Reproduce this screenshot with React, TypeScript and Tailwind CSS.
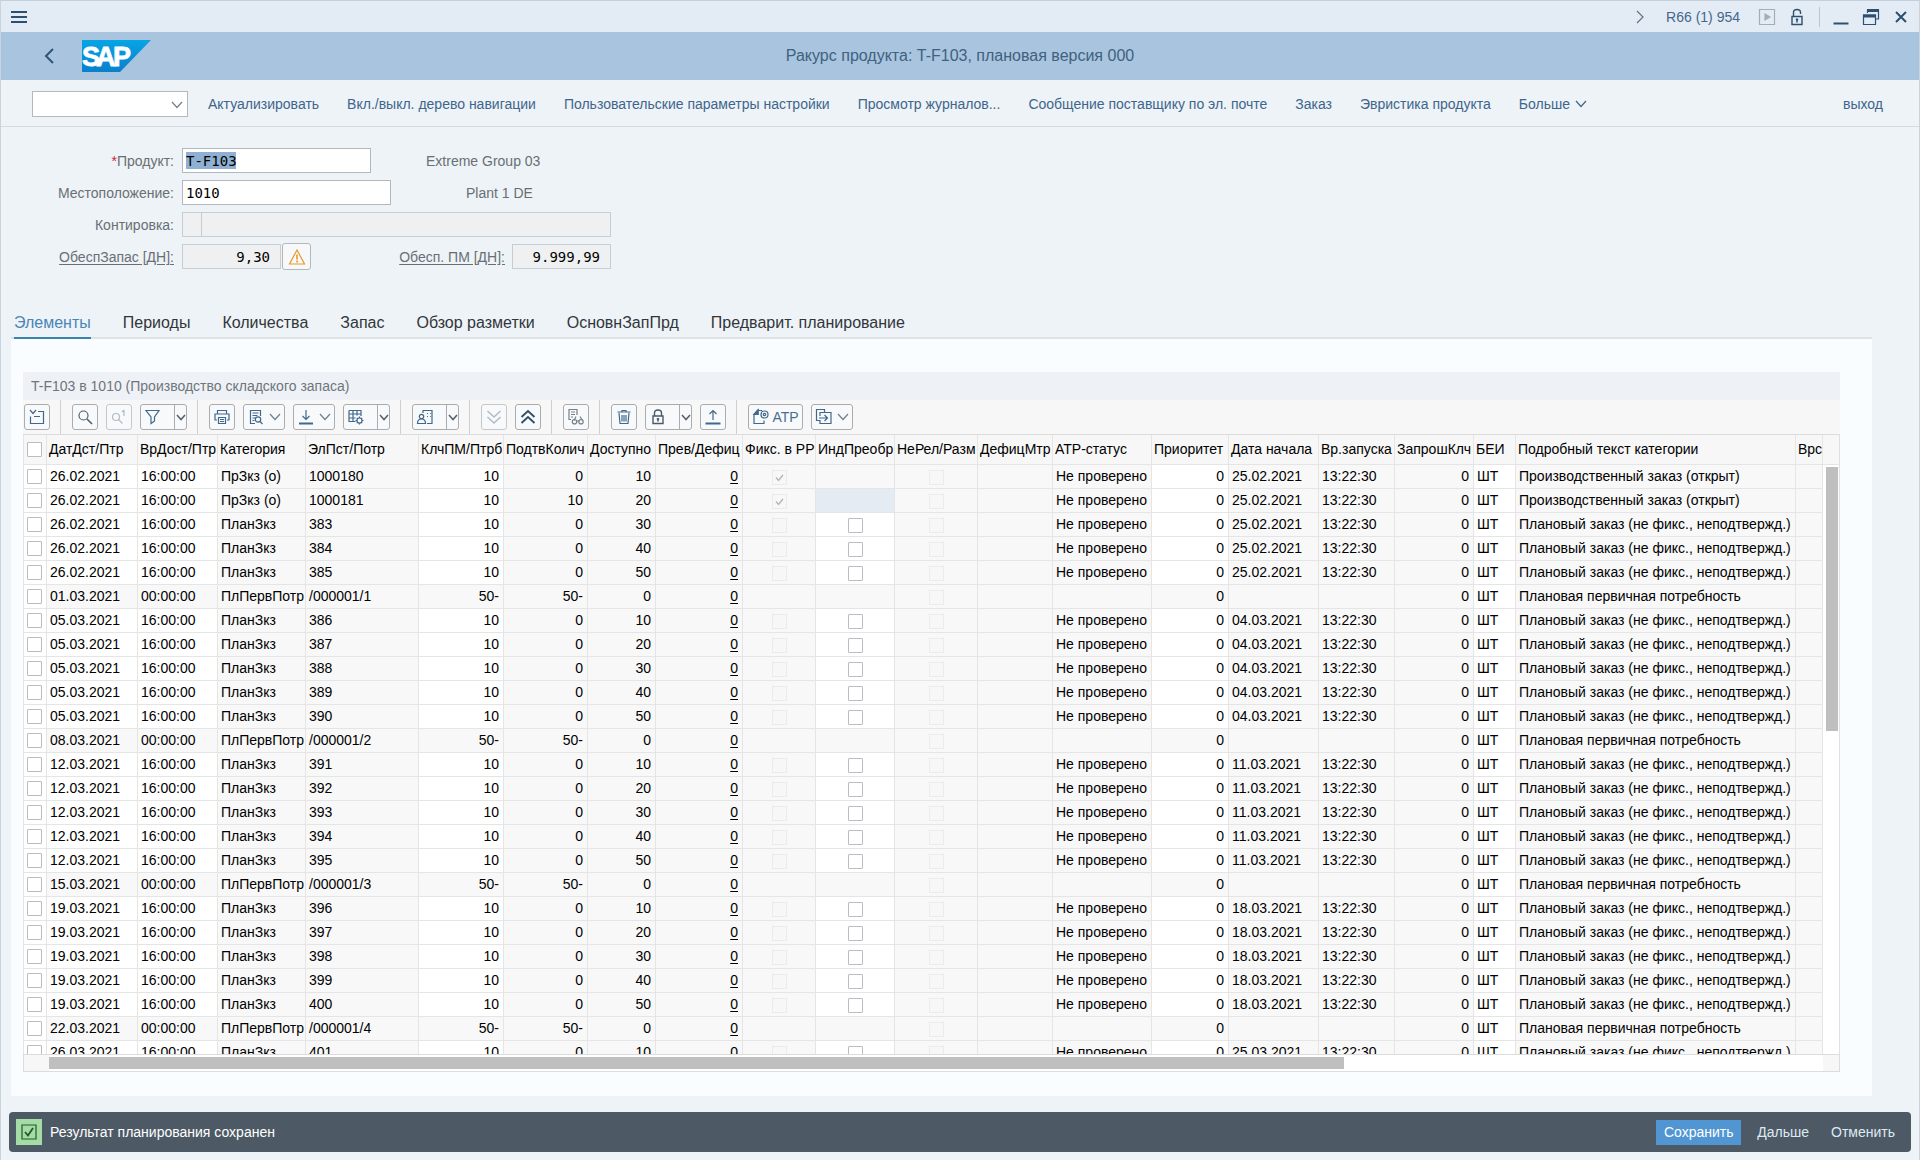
import type { ReactNode } from 'react';
import clsx from 'clsx';

type Kind = 'order' | 'plan' | 'demand';
type Row = { kind: Kind; date: string; element: string; confirmed: string; available: string; start: string };

const MENU = [
  'Актуализировать',
  'Вкл./выкл. дерево навигации',
  'Пользовательские параметры настройки',
  'Просмотр журналов...',
  'Сообщение поставщику по эл. почте',
  'Заказ',
  'Эвристика продукта',
];

const TABS = ['Элементы', 'Периоды', 'Количества', 'Запас', 'Обзор разметки', 'ОсновнЗапПрд', 'Предварит. планирование'];

const COLUMNS = [
  { label: 'ДатДст/Птр', width: 'w-[91px]' },
  { label: 'ВрДост/Птр', width: 'w-[80px]' },
  { label: 'Категория', width: 'w-[88px]' },
  { label: 'ЭлПст/Потр', width: 'w-[113px]' },
  { label: 'КлчПМ/Птрб', width: 'w-[85px]' },
  { label: 'ПодтвКолич', width: 'w-[84px]' },
  { label: 'Доступно', width: 'w-[68px]' },
  { label: 'Прев/Дефиц', width: 'w-[87px]' },
  { label: 'Фикс. в PP', width: 'w-[73px]' },
  { label: 'ИндПреобр', width: 'w-[79px]' },
  { label: 'НеРел/Разм', width: 'w-[83px]' },
  { label: 'ДефицМтр', width: 'w-[75px]' },
  { label: 'АТР-статус', width: 'w-[99px]' },
  { label: 'Приоритет', width: 'w-[77px]' },
  { label: 'Дата начала', width: 'w-[90px]' },
  { label: 'Вр.запуска', width: 'w-[76px]' },
  { label: 'ЗапрошКлч', width: 'w-[79px]' },
  { label: 'БЕИ', width: 'w-[42px]' },
  { label: 'Подробный текст категории', width: 'w-[280px]' },
  { label: 'Врс', width: 'w-auto' },
];

const CATEGORY: Record<Kind, string> = { order: 'ПрЗкз (о)', plan: 'ПланЗкз', demand: 'ПлПервПотр' };
const DETAILS: Record<Kind, string> = {
  order: 'Производственный заказ (открыт)',
  plan: 'Плановый заказ (не фикс., неподтвержд.)',
  demand: 'Плановая первичная потребность',
};

function demand(date: string, n: number): Row {
  return { kind: 'demand', date, element: `/000001/${n}`, confirmed: '50-', available: '0', start: '' };
}

function plans(date: string, start: string, first: number, count: number, available = 10): Row[] {
  return Array.from({ length: count }, (_, i) => ({
    kind: 'plan',
    date,
    element: String(first + i),
    confirmed: '0',
    available: String(available + i * 10),
    start,
  }));
}

const ROWS: Row[] = [
  { kind: 'order', date: '26.02.2021', element: '1000180', confirmed: '0', available: '10', start: '25.02.2021' },
  { kind: 'order', date: '26.02.2021', element: '1000181', confirmed: '10', available: '20', start: '25.02.2021' },
  ...plans('26.02.2021', '25.02.2021', 383, 3, 30),
  demand('01.03.2021', 1),
  ...plans('05.03.2021', '04.03.2021', 386, 5),
  demand('08.03.2021', 2),
  ...plans('12.03.2021', '11.03.2021', 391, 5),
  demand('15.03.2021', 3),
  ...plans('19.03.2021', '18.03.2021', 396, 5),
  demand('22.03.2021', 4),
  ...plans('26.03.2021', '25.03.2021', 401, 1),
];

function Icon({ children, className, size = 18 }: { children: ReactNode; className?: string; size?: number }) {
  return (
    <svg
      width={size}
      height={size}
      viewBox={`0 0 ${size} ${size}`}
      fill="none"
      stroke="currentColor"
      strokeWidth="1.2"
      className={clsx('shrink-0', className)}
      aria-hidden="true"
    >
      {children}
    </svg>
  );
}

function Chevron({ className }: { className?: string }) {
  return (
    <svg width="12" height="8" viewBox="0 0 12 8" fill="none" stroke="currentColor" strokeWidth="1.2" className={clsx('shrink-0', className)} aria-hidden="true">
      <path d="M1 1l5 5.5L11 1" />
    </svg>
  );
}

function Logo() {
  return (
    <svg width="69" height="32" viewBox="0 0 69 32" role="img" aria-label="SAP">
      <defs>
        <linearGradient id="sap" x1="0" y1="0" x2="0" y2="1">
          <stop offset="0" stopColor="#06a5e5" />
          <stop offset="1" stopColor="#0a80cc" />
        </linearGradient>
      </defs>
      <path d="M0 0h69L38 32H0z" fill="url(#sap)" />
      <text x="0 14 31" y="26" fill="#fff" stroke="#fff" strokeWidth="0.8" fontSize="27" fontWeight="700" fontFamily="Liberation Sans, Arial, sans-serif">
        SAP
      </text>
    </svg>
  );
}

type ToolButtonProps = { label: string; children: ReactNode; disabled?: boolean; menu?: boolean; split?: boolean; text?: string };

function ToolButton({ label, children, disabled, menu, split, text }: ToolButtonProps) {
  if (split) {
    return (
      <div className="flex h-[26px] w-[47px] rounded-[3px] border border-[#a9adb2] bg-[#f8f9fa]">
        <button type="button" aria-label={label} title={label} className="flex flex-1 items-center pl-[3px] text-[#41688c]">
          {children}
        </button>
        <button type="button" aria-label={`${label}: варианты`} className="flex w-3 items-center justify-center border-l border-[#a9adb2] text-[#54606c]">
          <Icon size={10}>
            <path d="M1 3l4 4.500L9 3" strokeWidth="1.5" />
          </Icon>
        </button>
      </div>
    );
  }
  return (
    <button
      type="button"
      aria-label={label}
      title={label}
      disabled={disabled}
      className={clsx(
        'flex h-[26px] items-center justify-center gap-1 rounded-[3px] border bg-[#f8f9fa]',
        disabled ? 'border-[#c4c8cc] text-[#b3bcc5]' : 'border-[#a9adb2] text-[#41688c]',
        text ? 'w-[55px]' : menu ? 'w-[42px]' : 'w-[26px]'
      )}
    >
      {children}
      {text && <span className="-ml-0.5 text-sm text-[#4a6f92]">{text}</span>}
      {menu && <Chevron className="text-[#6f7f8e]" />}
    </button>
  );
}

function Separator() {
  return <span className="mr-[3px] ml-0.5 w-px self-stretch bg-[#cfcfcf]" />;
}

function Toolbar() {
  return (
    <div className="flex h-[34px] items-center gap-2 bg-[#f7f7f7] pl-px" role="toolbar" aria-label="Таблица">
      <ToolButton label="Подробности">
        <Icon>
          <path d="M2 2l3 3.5L8 2M10 3.5h5.5v12h-13v-7M6 8.500h6" />
        </Icon>
      </ToolButton>
      <Separator />
      <ToolButton label="Поиск">
        <Icon className="text-[#4f5d6b]">
          <circle cx="7.5" cy="7.5" r="4.5" />
          <path d="M11 11l5 5" strokeWidth="1.6" />
        </Icon>
      </ToolButton>
      <ToolButton label="Искать дальше" disabled>
        <Icon>
          <circle cx="6" cy="9" r="3.5" />
          <path d="M8.5 11.5l4 4M14 2v6M12 4l2-2" />
        </Icon>
      </ToolButton>
      <ToolButton label="Фильтр" split>
        <Icon>
          <path d="M2 2.5h13L10.500 9v4l-3.500 2.500V9z" />
        </Icon>
      </ToolButton>
      <Separator />
      <ToolButton label="Печать">
        <Icon>
          <path d="M4.5 6V2.500h9V6M4 12H2V6h14v6h-2M5.500 9.500h7v6h-7zM7 11.500h4M7 13.500h4" />
        </Icon>
      </ToolButton>
      <ToolButton label="Просмотр" menu>
        <Icon>
          <path d="M8 15.500H3.500V2.500h10V8M5.500 5h6M5.500 7.500h5M5.500 10h3M5.500 12.500h2" />
          <circle cx="11" cy="11.5" r="2.7" />
          <path d="M13 13.5l2.500 2.500" />
        </Icon>
      </ToolButton>
      <ToolButton label="Экспорт" menu>
        <Icon>
          <path d="M9 2v9.500M5.500 8l3.500 3.500L12.500 8" />
          <path d="M2 15.5h14" strokeWidth="2" />
        </Icon>
      </ToolButton>
      <ToolButton label="Формат" split>
        <Icon>
          <path d="M2 2.500h12V8M2 2.500v11h6.500M2 6h12M2 10h6.500M6 2.500v11M10 2.500v5" />
          <circle cx="12.5" cy="12.5" r="2.5" />
          <path d="M12.500 8.500V10M12.500 15v1.500M8.500 12.500H10M15 12.500h1.500M9.800 9.800l1 1M14.200 14.200l1 1M9.800 15.200l1-1M14.200 10.800l1-1" />
        </Icon>
      </ToolButton>
      <Separator />
      <ToolButton label="Представление" split>
        <Icon>
          <path d="M7 5V2.500h9v13h-5M11 5.500h1M14 5.500h0.800M11 8.500h1M14 8.500h0.800" />
          <circle cx="5.5" cy="8.5" r="2.2" />
          <path d="M1.500 15.500c0-3 1.500-4.500 4-4.500s4 1.500 4 4.500z" />
        </Icon>
      </ToolButton>
      <Separator />
      <ToolButton label="Развернуть все" disabled>
        <Icon>
          <path d="M2.500 3L9 9l6.500-6M2.500 9L9 15l6.500-6" strokeWidth="1.6" />
        </Icon>
      </ToolButton>
      <ToolButton label="Свернуть все">
        <Icon className="text-[#2f4e6c]">
          <path d="M2.500 9L9 3l6.500 6M2.500 15L9 9l6.500 6" strokeWidth="1.8" />
        </Icon>
      </ToolButton>
      <Separator />
      <ToolButton label="Показать">
        <Icon className="text-[#758088]">
          <path d="M4 11.500H2v-10h8V7M4 4h4M4 6.500h4M4 9h2M9 8.500l-2 4M13 8.500l2.500 4M9.500 13h3" />
          <circle cx="7.5" cy="13.7" r="2.2" />
          <circle cx="14" cy="13.7" r="2.2" />
        </Icon>
      </ToolButton>
      <Separator />
      <ToolButton label="Удалить">
        <Icon>
          <path d="M2.500 4h13M7 4V2.500h4V4M4 5l1 10.500h8L14 5M7 7v6.500M9 7v6.500M11 7v6.500" />
        </Icon>
      </ToolButton>
      <ToolButton label="Фиксировать" split>
        <Icon className="text-[#4b5a68]">
          <path d="M4 8h10v7.500H4zM5.500 8V5c0-4 7-4 7 0v3" strokeWidth="1.4" />
          <path d="M9 10v3.500M7.800 11h2.400" strokeWidth="1.6" />
        </Icon>
      </ToolButton>
      <ToolButton label="Загрузить">
        <Icon>
          <path d="M9 12V2.500M5.500 6L9 2.500 12.500 6" />
          <path d="M1.500 15.500h15" strokeWidth="2" />
        </Icon>
      </ToolButton>
      <Separator />
      <ToolButton label="ATP" text="ATP">
        <Icon>
          <path d="M6.500 2.500H10M6 2L2 6.500h4zM2 6.500v9h10v-3" />
          <path d="M6 2L2 6.500h4z" fill="currentColor" />
          <circle cx="12.5" cy="6.5" r="3.5" />
          <circle cx="12.5" cy="6.5" r="1.2" />
        </Icon>
      </ToolButton>
      <ToolButton label="Перейти" menu>
        <Icon>
          <path d="M5 12.500H1.500v-11h8V4M5 8V4.500h11v11H5V12M4 10h8M9.500 7l3 3-3 3" />
        </Icon>
      </ToolButton>
    </div>
  );
}

function Tick({ label, disabled, checked }: { label: string; disabled?: boolean; checked?: boolean }) {
  return (
    <span className="relative block size-[15px]">
      <input
        type="checkbox"
        aria-label={label}
        disabled={disabled}
        defaultChecked={checked}
        className={clsx('block size-[15px] appearance-none border', disabled ? 'border-[#ebebeb] bg-[#f7f7f7]' : 'rounded-[1px] border-[#b9bdc1] bg-white')}
      />
      {checked && (
        <svg viewBox="0 0 15 15" fill="none" stroke="#b4b4b4" strokeWidth="1.3" className="pointer-events-none absolute inset-0">
          <path d="M4 7.5l2.500 3L11 5" />
        </svg>
      )}
    </span>
  );
}

type CellProps = { children?: ReactNode; tone?: 'grey' | 'white' | 'focus'; align?: 'left' | 'right' | 'center' };

function Cell({ children, tone = 'grey', align = 'left' }: CellProps) {
  return (
    <td
      className={clsx(
        'h-6 overflow-hidden border-r border-b border-[#e5e5e5] p-0 pb-0.5 leading-5 whitespace-nowrap',
        tone === 'white' && 'bg-white',
        tone === 'grey' && 'bg-[#f8f8f8]',
        tone === 'focus' && 'bg-[#e4ebf2]',
        align === 'left' && 'pl-[3px]',
        align === 'right' && 'pr-1 text-right'
      )}
    >
      {align === 'center' ? <div className="flex justify-center pt-1">{children}</div> : children}
    </td>
  );
}

function ElementRow({ row }: { row: Row }) {
  const isDemand = row.kind === 'demand';
  const editable = isDemand ? 'grey' : 'white';

  return (
    <tr>
      <td className="h-6 border-x border-b border-[#e5e5e5] bg-white p-0 pl-[3px]">
        <Tick label={`Выбрать ${row.element}`} />
      </td>
      <Cell tone={editable}>{row.date}</Cell>
      <Cell tone={editable}>{isDemand ? '00:00:00' : '16:00:00'}</Cell>
      <Cell>{CATEGORY[row.kind]}</Cell>
      <Cell>{row.element}</Cell>
      <Cell tone={editable} align="right">
        {isDemand ? '50-' : '10'}
      </Cell>
      <Cell align="right">{row.confirmed}</Cell>
      <Cell align="right">{row.available}</Cell>
      <Cell align="right">
        <a href="#deficit" className="underline underline-offset-2">
          0
        </a>
      </Cell>
      <Cell align="center">{!isDemand && <Tick label="Фикс. в PP" disabled checked={row.kind === 'order'} />}</Cell>
      <Cell tone={row.kind === 'plan' ? 'white' : row.element === '1000181' ? 'focus' : 'grey'} align="center">
        {row.kind === 'plan' && <Tick label="ИндПреобр" />}
      </Cell>
      <Cell align="center">
        <Tick label="НеРел/Разм" disabled />
      </Cell>
      <Cell />
      <Cell>{!isDemand && 'Не проверено'}</Cell>
      <Cell tone={editable} align="right">
        0
      </Cell>
      <Cell>{row.start}</Cell>
      <Cell>{!isDemand && '13:22:30'}</Cell>
      <Cell align="right">0</Cell>
      <Cell tone="white">ШТ</Cell>
      <Cell>{DETAILS[row.kind]}</Cell>
      <Cell />
    </tr>
  );
}

function ElementsGrid() {
  return (
    <section className="flex min-h-0 flex-1 flex-col">
      <h2 className="flex h-7 items-center bg-[#eef2f6] pl-2 text-sm text-[#6f757b]">T-F103 в 1010 (Производство складского запаса)</h2>
      <Toolbar />
      <div className="flex min-h-0 flex-1 border-y border-[#dcdcdc]">
        <div className="min-h-0 min-w-0 flex-1 overflow-hidden">
          <table className="w-full table-fixed border-separate border-spacing-0 text-sm text-black">
            <colgroup>
              <col className="w-6" />
              {COLUMNS.map((c) => (
                <col key={c.label} className={c.width} />
              ))}
            </colgroup>
            <thead>
              <tr>
                <th className="h-[30px] border-x border-b border-[#e5e5e5] bg-[#f7f7f7] p-0 pl-[3px]">
                  <Tick label="Выбрать все" />
                </th>
                {COLUMNS.map((c) => (
                  <th key={c.label} className="h-[30px] overflow-hidden border-r border-b border-[#e5e5e5] bg-[#f7f7f7] p-0 pb-0.5 pl-0.5 text-left font-normal whitespace-nowrap">
                    {c.label}
                  </th>
                ))}
              </tr>
            </thead>
            <tbody>
              {ROWS.map((row) => (
                <ElementRow key={row.element} row={row} />
              ))}
            </tbody>
          </table>
        </div>
        <div className="flex w-[17px] flex-col border-r border-[#e0e0e0] bg-white">
          <div className="h-[30px] border-b border-[#e5e5e5] bg-[#f7f7f7]" />
          <div className="min-h-0 flex-1 pt-0.5 pr-px pl-[3px]">
            <div className="h-[45%] bg-[#bfbfbf]" />
          </div>
        </div>
      </div>
      <div className="flex h-[17px] border-x border-b border-[#dcdcdc] bg-white">
        <div className="w-[25px] bg-[#f7f7f7]" />
        <div className="flex-1 py-0.5">
          <div className="h-3 w-[73%] bg-[#bfbfbf]" />
        </div>
        <div className="w-4 bg-[#f7f7f7]" />
      </div>
    </section>
  );
}

function TitleBar() {
  return (
    <div className="flex h-8 items-center border-t border-[#c5cfda] bg-[#e3ecf5] pr-[9px] pl-[9px] text-[#2d5070]">
      <button type="button" aria-label="Меню">
        <Icon>
          <path d="M1 4h16M1 9h16M1 14h16" strokeWidth="2" />
        </Icon>
      </button>
      <div className="ml-auto flex items-center">
        <button type="button" aria-label="Развернуть">
          <Icon size={16} className="text-[#5c7388]">
            <path d="M5 2l6 6-6 6" />
          </Icon>
        </button>
        <span className="ml-[18px] text-sm text-[#45678a]">R66 (1) 954</span>
        <button type="button" aria-label="Запустить" className="ml-[18px]" disabled>
          <Icon className="text-[#a3adb7]">
            <path d="M1.500 1.500h15v15h-15z" />
            <path d="M7 6l5 3-5 3z" fill="currentColor" />
          </Icon>
        </button>
        <button type="button" aria-label="Блокировка" className="ml-3">
          <Icon>
            <path d="M4 8.500h10v8H4zM5.500 8.500V4.500c0-4 7-4 7 0V6" strokeWidth="1.4" />
            <path d="M9 10.500v4M7.800 11.500h2.400" strokeWidth="1.5" />
          </Icon>
        </button>
        <span className="ml-[13px] h-5 w-px bg-[#b9c5d1]" />
        <button type="button" aria-label="Свернуть окно" className="ml-3">
          <Icon>
            <path d="M1.500 15.500h15" strokeWidth="2" />
          </Icon>
        </button>
        <button type="button" aria-label="Восстановить окно" className="ml-3">
          <Icon>
            <path d="M5.500 5V2h11v9H14" />
            <path d="M5 2.500h12" strokeWidth="3" />
            <path d="M1.500 7h12v9.500h-12z" />
            <path d="M1 8h13" strokeWidth="3" />
          </Icon>
        </button>
        <button type="button" aria-label="Закрыть" className="ml-3">
          <Icon>
            <path d="M4 4l10 10M14 4L4 14" strokeWidth="2" />
          </Icon>
        </button>
      </div>
    </div>
  );
}

const fieldBase = 'h-[25px] border px-[3px] font-[DejaVu_Sans_Mono,monospace] text-sm text-black outline-none';
const editField = clsx(fieldBase, 'border-[#b3b8bd] bg-white');
const readField = clsx(fieldBase, 'border-[#c9ccd0] bg-[#eff0f1]');
const labelClass = 'w-[173px] text-right';

function ProductForm() {
  return (
    <form className="flex flex-col gap-[7px] pt-[21px] text-sm text-[#6a6f74]">
      <div className="flex items-center">
        <label htmlFor="product" className={labelClass}>
          <span className="text-[#d0204a]">*</span>Продукт:
        </label>
        {/* the product number starts out highlighted */}
        <div className="relative ml-2 bg-white">
          <span className="absolute top-1 left-1 h-[17px] w-[50px] bg-[#8fb0d2]" />
          <input id="product" defaultValue="T-F103" className={clsx(fieldBase, 'relative block w-[189px] border-[#b3b8bd] bg-transparent')} />
        </div>
        <span className="ml-[55px]">Extreme Group 03</span>
      </div>
      <div className="flex items-center">
        <label htmlFor="location" className={labelClass}>
          Местоположение:
        </label>
        <input id="location" defaultValue="1010" className={clsx(editField, 'ml-2 w-[209px]')} />
        <span className="ml-[75px]">Plant 1 DE</span>
      </div>
      <div className="flex items-center">
        <label htmlFor="assignment" className={labelClass}>
          Контировка:
        </label>
        <input id="assignment" readOnly className={clsx(readField, 'ml-2 w-5')} />
        <input aria-label="Контировка, текст" readOnly className={clsx(readField, '-ml-px w-[410px]')} />
      </div>
      <div className="flex h-[25px] items-center">
        <label htmlFor="stock" className={clsx(labelClass, 'underline underline-offset-2')}>
          ОбеспЗапас [ДН]:
        </label>
        <input id="stock" readOnly defaultValue="9,30" className={clsx(readField, 'ml-2 w-[99px] pr-[10px] text-right')} />
        <button type="button" aria-label="Предупреждение" className="ml-px flex h-[27px] w-[29px] items-center justify-center rounded-[3px] border border-[#b3b8bd] bg-[#f7f8f9]">
          <Icon className="text-[#e59a2b]">
            <path d="M9 2L1.500 16h15z" />
            <path d="M9 6.500v5M9 12.500v2" strokeWidth="1.6" />
          </Icon>
        </button>
        <label htmlFor="receipts" className="w-[194px] text-right underline underline-offset-2">
          Обесп. ПМ [ДН]:
        </label>
        <input id="receipts" readOnly defaultValue="9.999,99" className={clsx(readField, 'ml-[7px] w-[99px] pr-[10px] text-right')} />
      </div>
    </form>
  );
}

export default function App() {
  return (
    <div className="flex h-screen flex-col border-x border-[#c9d3dc] bg-[#edf3f7] font-['Liberation_Sans',Arial,sans-serif]">
      <TitleBar />

      <header className="grid h-12 grid-cols-[1fr_auto_1fr] items-center bg-[#a9c4de]">
        <div className="flex items-center pl-10">
          <button type="button" aria-label="Назад" className="text-[#2f5678]">
            <Icon>
              <path d="M12 2L5 9l7 7" strokeWidth="2" />
            </Icon>
          </button>
          <span className="ml-[23px]">
            <Logo />
          </span>
        </div>
        <h1 className="text-base text-[#40617f]">Ракурс продукта: T-F103, плановая версия 000</h1>
      </header>

      <nav className="flex h-[47px] items-center gap-7 border-b border-[#d3dbe2] pt-0.5 pr-9 pl-[31px] text-sm text-[#3f658c]">
        <div className="relative -mr-2">
          <select aria-label="Команда" className="block h-[26px] w-[156px] appearance-none border border-[#b3b8bd] bg-white outline-none">
            <option></option>
          </select>
          <Chevron className="pointer-events-none absolute top-[10px] right-[5px] text-[#6f7f8e]" />
        </div>
        {MENU.map((item) => (
          <button key={item} type="button" className="whitespace-nowrap">
            {item}
          </button>
        ))}
        <button type="button" className="flex items-center gap-[5px] whitespace-nowrap">
          Больше
          <Chevron />
        </button>
        <button type="button" className="ml-auto whitespace-nowrap">
          выход
        </button>
      </nav>

      <ProductForm />

      <main className="mt-9 mr-[47px] ml-[10px] flex min-h-0 flex-1 flex-col">
        <div role="tablist" className="flex h-[34px] gap-8 border-b-2 border-[#dbe2e8] pl-[3px]">
          {TABS.map((tab, i) => (
            <button
              key={tab}
              type="button"
              role="tab"
              aria-selected={i === 0}
              className={clsx('-mb-0.5 border-b-2 pt-1 text-base whitespace-nowrap', i === 0 ? 'border-[#3c82ae] text-[#4a85b5]' : 'border-transparent text-[#32363a]')}
            >
              {tab}
            </button>
          ))}
        </div>
        <div className="flex min-h-0 flex-1 flex-col bg-[#fafdff] pt-[33px] pr-8 pb-6 pl-3">
          <ElementsGrid />
        </div>
      </main>

      <footer className="mx-2 mt-4 mb-2 flex h-10 items-center rounded-[4px] bg-[#4d5a65] pr-4 pl-[7px] text-sm text-[#dfe9f2]">
        <span className="flex size-[26px] items-center justify-center bg-[#a5dca5] text-[#1f5a2a]">
          <Icon size={16}>
            <path d="M1 1h14v14H1z" />
            <path d="M4 8l3 3.500L12 4" strokeWidth="1.8" />
          </Icon>
        </span>
        <p className="ml-2 text-white">Результат планирования сохранен</p>
        <button type="button" className="ml-auto h-[25px] w-[85px] bg-[#5196d3] text-white">
          Сохранить
        </button>
        <button type="button" className="ml-4">
          Дальше
        </button>
        <button type="button" className="ml-[22px]">
          Отменить
        </button>
      </footer>
    </div>
  );
}
